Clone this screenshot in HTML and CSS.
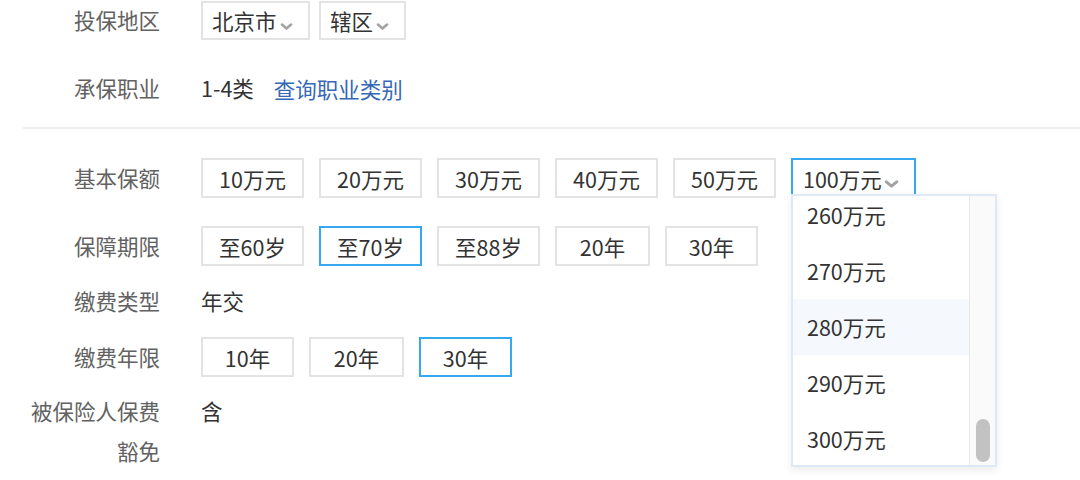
FILE: index.html
```html
<!DOCTYPE html>
<html lang="zh-CN">
<head>
<meta charset="utf-8">
<title>投保信息</title>
<link rel="stylesheet" href="styles.css">
</head>
<body>
<div class="form">
  <div class="row r1">
    <div class="label">投保地区</div>
    <div class="field">
      <div class="sel sel-city">北京市<svg class="chev" viewBox="0 0 14 8"><path d="M1.8 1.8 L7 6.2 L12.2 1.8"/></svg></div>
      <div class="sel sel-dist">辖区<svg class="chev" viewBox="0 0 14 8"><path d="M1.8 1.8 L7 6.2 L12.2 1.8"/></svg></div>
    </div>
  </div>
  <div class="row r2">
    <div class="label">承保职业</div>
    <div class="field">
      <span class="value">1-4类</span>
      <a class="link" href="#">查询职业类别</a>
    </div>
  </div>
  <div class="divider"></div>
  <div class="row r3">
    <div class="label">基本保额</div>
    <div class="field">
      <div class="opt">10万元</div>
      <div class="opt">20万元</div>
      <div class="opt">30万元</div>
      <div class="opt">40万元</div>
      <div class="opt">50万元</div>
      <div class="select-wrap">
        <div class="sel sel-amount active">100万元<svg class="chev" viewBox="0 0 14 8"><path d="M1.8 1.8 L7 6.2 L12.2 1.8"/></svg></div>
        <div class="dropdown">
          <div class="list">
            <div class="item">260万元</div>
            <div class="item">270万元</div>
            <div class="item hover">280万元</div>
            <div class="item">290万元</div>
            <div class="item">300万元</div>
          </div>
          <div class="track"><div class="thumb"></div></div>
        </div>
      </div>
    </div>
  </div>
  <div class="row r4">
    <div class="label">保障期限</div>
    <div class="field">
      <div class="opt">至60岁</div>
      <div class="opt active">至70岁</div>
      <div class="opt">至88岁</div>
      <div class="opt short w95">20年</div>
      <div class="opt short">30年</div>
    </div>
  </div>
  <div class="row r5">
    <div class="label">缴费类型</div>
    <div class="field"><span class="value">年交</span></div>
  </div>
  <div class="row r6">
    <div class="label">缴费年限</div>
    <div class="field">
      <div class="opt short">10年</div>
      <div class="opt short w95">20年</div>
      <div class="opt short active">30年</div>
    </div>
  </div>
  <div class="row r7">
    <div class="label">被保险人保费豁免</div>
    <div class="field"><span class="value">含</span></div>
  </div>
</div>
</body>
</html>
```
FILE: styles.css
```css
* { box-sizing: border-box; }
html, body { margin: 0; padding: 0; background: #fff; }
body {
  font-family: "Noto Sans CJK SC", "Noto Sans", sans-serif;
  font-size: 21.5px;
  color: #333;
  width: 1080px;
  height: 480px;
  overflow: hidden;
}
.form { position: relative; }
.row {
  display: flex;
  align-items: center;
  padding-left: 20px;
  min-height: 40px;
}
.label {
  width: 140px;
  flex: none;
  text-align: right;
  color: #626262;
  line-height: 40px;
}
.field {
  margin-left: 41px;
  display: flex;
  align-items: center;
  gap: 15px;
}
.r1 { margin-top: 0; }
.r2 { margin-top: 28px; }
.r2 .field { gap: 20px; }
.divider {
  margin: 19px 0 0 23px;
  height: 2px;
  background: #efefef;
}
.r3 { margin-top: 29px; }
.r4 { margin-top: 28px; }
.r5 { margin-top: 15px; }
.r6 { margin-top: 16px; }
.r7 { margin-top: 14px; align-items: flex-start; }
.r7 .label { line-height: 40px; }
.r7 .value { line-height: 40px; }
.value { color: #333; line-height: 40px; }
.link { color: #3668b6; text-decoration: none; }

.opt, .sel {
  height: 40px;
  border: 2px solid #e3e3e3;
  background: #fff;
  display: flex;
  align-items: center;
  color: #333;
}
.opt { width: 103px; justify-content: center; }
.opt.short { width: 93px; }
.opt.w95 { width: 95px; }
.opt.active, .sel.active { border-color: #35a9f0; }

.sel { padding-left: 9px; }
.sel-city { width: 109px; height: 39px; margin-top: 1px; }
.sel-dist { width: 87px; height: 39px; margin-top: 1px; margin-left: -6px; }
.r1 .field { gap: 15px; }
.chev {
  width: 13px;
  height: 7px;
  margin-left: 3px;
  margin-top: 11px;
  flex: none;
}
.chev path { fill: none; stroke: #a3a3a3; stroke-width: 3; stroke-linecap: round; stroke-linejoin: round; }
.sel-amount { width: 125px; padding-left: 10px; }
.sel-amount .chev { width: 15px; height: 8px; margin-left: 2px; }

.select-wrap { position: relative; }
.dropdown {
  position: absolute;
  left: 0;
  top: 36px;
  width: 206px;
  height: 273px;
  background: #fff;
  border: 2px solid #dde9f8;
  box-shadow: 0 3px 8px rgba(0, 0, 0, 0.08);
  display: flex;
  overflow: hidden;
  z-index: 5;
}
.list { flex: 1; margin-top: -9px; }
.item {
  height: 56px;
  line-height: 56px;
  padding-left: 14px;
  color: #333;
}
.item.hover { background: #f5f8fd; }
.track {
  width: 26px;
  flex: none;
  background: #fafafa;
  border-left: 1px solid #e9e9e9;
  position: relative;
}
.thumb {
  position: absolute;
  left: 6px;
  top: 223px;
  width: 14px;
  height: 43px;
  border-radius: 7px;
  background: #c2c2c2;
}
```
